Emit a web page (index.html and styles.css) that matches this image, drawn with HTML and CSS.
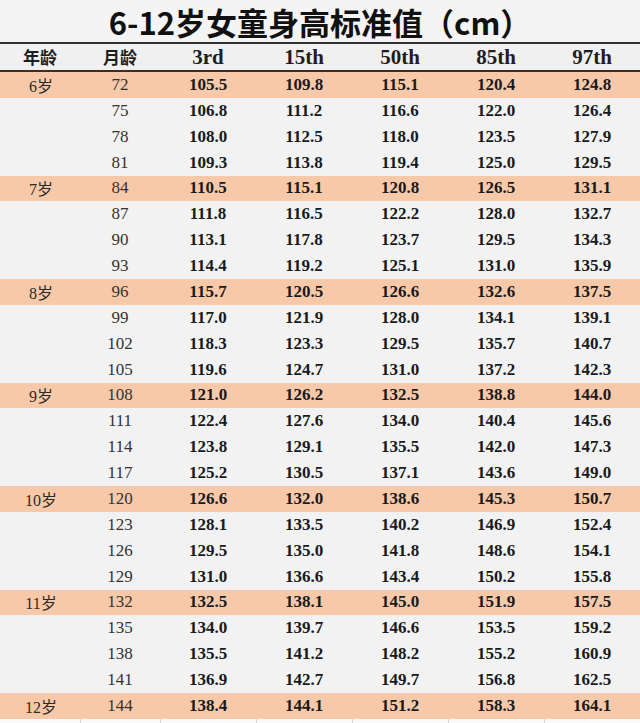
FILE: index.html
```html
<!DOCTYPE html>
<html lang="zh">
<head>
<meta charset="utf-8">
<title>6-12岁女童身高标准值</title>
<link rel="stylesheet" href="styles.css">
</head>
<body>
<div class="page">
  <div class="title-bar"><h1 class="title">6-12岁女童身高标准值（cm）</h1></div>
  <div class="row head">
    <div class="cell cjk">年龄</div>
    <div class="cell cjk">月龄</div>
    <div class="cell pct">3rd</div>
    <div class="cell pct">15th</div>
    <div class="cell pct">50th</div>
    <div class="cell pct">85th</div>
    <div class="cell pct">97th</div>
  </div>
  <div class="body" id="body">
    <div class="row hl"><div class="cell age">6岁</div><div class="cell mon">72</div><div class="cell v">105.5</div><div class="cell v">109.8</div><div class="cell v">115.1</div><div class="cell v">120.4</div><div class="cell v">124.8</div></div>
    <div class="row"><div class="cell age"></div><div class="cell mon">75</div><div class="cell v">106.8</div><div class="cell v">111.2</div><div class="cell v">116.6</div><div class="cell v">122.0</div><div class="cell v">126.4</div></div>
    <div class="row"><div class="cell age"></div><div class="cell mon">78</div><div class="cell v">108.0</div><div class="cell v">112.5</div><div class="cell v">118.0</div><div class="cell v">123.5</div><div class="cell v">127.9</div></div>
    <div class="row"><div class="cell age"></div><div class="cell mon">81</div><div class="cell v">109.3</div><div class="cell v">113.8</div><div class="cell v">119.4</div><div class="cell v">125.0</div><div class="cell v">129.5</div></div>
    <div class="row hl"><div class="cell age">7岁</div><div class="cell mon">84</div><div class="cell v">110.5</div><div class="cell v">115.1</div><div class="cell v">120.8</div><div class="cell v">126.5</div><div class="cell v">131.1</div></div>
    <div class="row"><div class="cell age"></div><div class="cell mon">87</div><div class="cell v">111.8</div><div class="cell v">116.5</div><div class="cell v">122.2</div><div class="cell v">128.0</div><div class="cell v">132.7</div></div>
    <div class="row"><div class="cell age"></div><div class="cell mon">90</div><div class="cell v">113.1</div><div class="cell v">117.8</div><div class="cell v">123.7</div><div class="cell v">129.5</div><div class="cell v">134.3</div></div>
    <div class="row"><div class="cell age"></div><div class="cell mon">93</div><div class="cell v">114.4</div><div class="cell v">119.2</div><div class="cell v">125.1</div><div class="cell v">131.0</div><div class="cell v">135.9</div></div>
    <div class="row hl"><div class="cell age">8岁</div><div class="cell mon">96</div><div class="cell v">115.7</div><div class="cell v">120.5</div><div class="cell v">126.6</div><div class="cell v">132.6</div><div class="cell v">137.5</div></div>
    <div class="row"><div class="cell age"></div><div class="cell mon">99</div><div class="cell v">117.0</div><div class="cell v">121.9</div><div class="cell v">128.0</div><div class="cell v">134.1</div><div class="cell v">139.1</div></div>
    <div class="row"><div class="cell age"></div><div class="cell mon">102</div><div class="cell v">118.3</div><div class="cell v">123.3</div><div class="cell v">129.5</div><div class="cell v">135.7</div><div class="cell v">140.7</div></div>
    <div class="row"><div class="cell age"></div><div class="cell mon">105</div><div class="cell v">119.6</div><div class="cell v">124.7</div><div class="cell v">131.0</div><div class="cell v">137.2</div><div class="cell v">142.3</div></div>
    <div class="row hl"><div class="cell age">9岁</div><div class="cell mon">108</div><div class="cell v">121.0</div><div class="cell v">126.2</div><div class="cell v">132.5</div><div class="cell v">138.8</div><div class="cell v">144.0</div></div>
    <div class="row"><div class="cell age"></div><div class="cell mon">111</div><div class="cell v">122.4</div><div class="cell v">127.6</div><div class="cell v">134.0</div><div class="cell v">140.4</div><div class="cell v">145.6</div></div>
    <div class="row"><div class="cell age"></div><div class="cell mon">114</div><div class="cell v">123.8</div><div class="cell v">129.1</div><div class="cell v">135.5</div><div class="cell v">142.0</div><div class="cell v">147.3</div></div>
    <div class="row"><div class="cell age"></div><div class="cell mon">117</div><div class="cell v">125.2</div><div class="cell v">130.5</div><div class="cell v">137.1</div><div class="cell v">143.6</div><div class="cell v">149.0</div></div>
    <div class="row hl"><div class="cell age">10岁</div><div class="cell mon">120</div><div class="cell v">126.6</div><div class="cell v">132.0</div><div class="cell v">138.6</div><div class="cell v">145.3</div><div class="cell v">150.7</div></div>
    <div class="row"><div class="cell age"></div><div class="cell mon">123</div><div class="cell v">128.1</div><div class="cell v">133.5</div><div class="cell v">140.2</div><div class="cell v">146.9</div><div class="cell v">152.4</div></div>
    <div class="row"><div class="cell age"></div><div class="cell mon">126</div><div class="cell v">129.5</div><div class="cell v">135.0</div><div class="cell v">141.8</div><div class="cell v">148.6</div><div class="cell v">154.1</div></div>
    <div class="row"><div class="cell age"></div><div class="cell mon">129</div><div class="cell v">131.0</div><div class="cell v">136.6</div><div class="cell v">143.4</div><div class="cell v">150.2</div><div class="cell v">155.8</div></div>
    <div class="row hl"><div class="cell age">11岁</div><div class="cell mon">132</div><div class="cell v">132.5</div><div class="cell v">138.1</div><div class="cell v">145.0</div><div class="cell v">151.9</div><div class="cell v">157.5</div></div>
    <div class="row"><div class="cell age"></div><div class="cell mon">135</div><div class="cell v">134.0</div><div class="cell v">139.7</div><div class="cell v">146.6</div><div class="cell v">153.5</div><div class="cell v">159.2</div></div>
    <div class="row"><div class="cell age"></div><div class="cell mon">138</div><div class="cell v">135.5</div><div class="cell v">141.2</div><div class="cell v">148.2</div><div class="cell v">155.2</div><div class="cell v">160.9</div></div>
    <div class="row"><div class="cell age"></div><div class="cell mon">141</div><div class="cell v">136.9</div><div class="cell v">142.7</div><div class="cell v">149.7</div><div class="cell v">156.8</div><div class="cell v">162.5</div></div>
    <div class="row hl"><div class="cell age">12岁</div><div class="cell mon">144</div><div class="cell v">138.4</div><div class="cell v">144.1</div><div class="cell v">151.2</div><div class="cell v">158.3</div><div class="cell v">164.1</div></div>
  </div>
  <div class="row foot">
    <div class="cell"></div><div class="cell"></div><div class="cell"></div><div class="cell"></div><div class="cell"></div><div class="cell"></div><div class="cell"></div>
  </div>
</div>
</body>
</html>
```
FILE: styles.css
```css
html, body {
  margin: 0;
  padding: 0;
  background: #f2f2f2;
}
.page {
  width: 640px;
  height: 723px;
  overflow: hidden;
  display: flex;
  flex-direction: column;
  background: #f2f2f2;
}
.title-bar {
  flex: none;
  height: 44px;
  box-sizing: border-box;
  border-bottom: 2px solid #2e2e2e;
  background: #f4f4f4;
  display: flex;
  align-items: flex-end;
  justify-content: center;
}
.title {
  margin: 0;
  font-family: "Noto Sans CJK SC", "Noto Sans", sans-serif;
  font-weight: 700;
  font-size: 31px;
  line-height: 40px;
  color: #111;
}
.row {
  display: grid;
  grid-template-columns: 80px 80px 96px 96px 96px 96px 96px;
  align-items: center;
}
.cell {
  text-align: center;
  white-space: nowrap;
}
.head {
  height: 28px;
  box-sizing: border-box;
  border-bottom: 2px solid #3e2c20;
  background: #f0f0f0;
  flex: none;
  color: #1e1e1e;
}
.head .cjk {
  font-family: "Noto Sans CJK SC", sans-serif;
  font-weight: 700;
  font-size: 17px;
  line-height: 26px;
}
.head .pct {
  font-family: "Liberation Serif", serif;
  font-weight: 700;
  font-size: 21px;
  line-height: 26px;
}
.body {
  height: 647px;
  display: flex;
  flex-direction: column;
  flex: none;
}
.body .row {
  flex: 1;
  background: #f2f2f2;
}
.body .row.hl {
  background: #f8c9a9;
}
.age {
  font-family: "Liberation Serif", "Noto Sans CJK SC", serif;
  font-size: 16px;
  color: #2a2a2a;
  padding-left: 2px;
}
.mon {
  font-family: "Liberation Serif", serif;
  font-size: 17px;
  color: #333;
}
.v {
  font-family: "Liberation Serif", serif;
  font-weight: 700;
  font-size: 17px;
  color: #1a1a1a;
}
.foot {
  flex: 1;
  background: #fafafa;
  align-items: stretch;
}
.foot .cell {
  border-left: 1px solid #d4d4d4;
}
.foot .cell:first-child {
  border-left: none;
}
```
